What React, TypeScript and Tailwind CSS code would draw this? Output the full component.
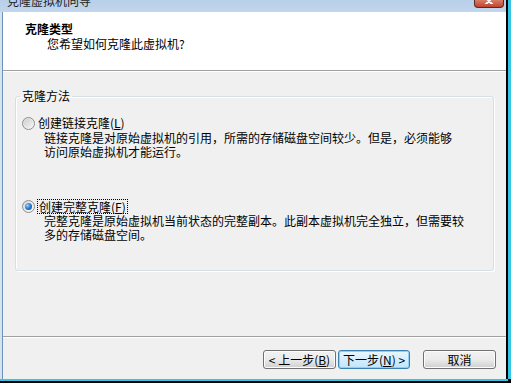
import React from 'react';

const font = { fontFamily: '"Noto Sans CJK SC", "Microsoft YaHei", sans-serif' };

function Radio({ checked }: { checked?: boolean }) {
  return (
    <div className="w-[13px] h-[13px] rounded-full border border-[#8d8d8d] bg-gradient-to-br from-[#d9d9d9] to-[#fbfbfb] flex items-center justify-center shrink-0">
      {checked ? (
        <div className="w-[7px] h-[7px] rounded-full bg-[radial-gradient(circle_at_35%_35%,#9fd3ff_0%,#2f7fd3_45%,#0b3f8c_100%)]" />
      ) : (
        <div className="w-[9px] h-[9px] rounded-full bg-gradient-to-br from-[#cfcfcf] to-[#f4f4f4]" />
      )}
    </div>
  );
}

function Button({ children, focused }: { children: React.ReactNode; focused?: boolean }) {
  return (
    <div
      className={
        'h-[19px] rounded-[3px] border flex items-center justify-center text-[12px] leading-[14px] text-black ' +
        (focused
          ? 'w-[72px] border-[#3c7fb1] bg-gradient-to-b from-[#eaf6fd] to-[#bee6fd] shadow-[inset_0_0_0_1px_#8fd0f5]'
          : 'w-[73px] border-[#707070] bg-gradient-to-b from-[#f2f2f2] via-[#ebebeb] to-[#cfcfcf] shadow-[inset_0_0_0_1px_#fcfcfc]')
      }
    >
      {children}
    </div>
  );
}

export default function App() {
  return (
    <div className="w-[511px] h-[383px] bg-black flex flex-col overflow-hidden" style={font}>
      <div className="flex h-[379px]">
        <div className="w-[506px] flex flex-col">
          {/* title bar */}
          <div className="h-[12px] bg-gradient-to-b from-[#b7cfe9] to-[#c2d6ec] flex overflow-hidden relative">
            <div className="ml-[7px] mt-[-5px] text-[12px] leading-[12px] text-[#1e1e1e]">克隆虚拟机向导</div>
            <div className="absolute left-[474px] top-0 w-[30px] h-[8px] rounded-b-[4px] border border-t-0 border-[#5b2a23] bg-gradient-to-b from-[#d77b66] to-[#c0432e] flex justify-center overflow-hidden">
              <svg width="10" height="8" viewBox="0 0 10 8" className="-mt-[4px]">
                <path d="M1 1 L9 9 M9 1 L1 9" stroke="#fff" strokeWidth="2" />
              </svg>
            </div>
          </div>
          <div className="flex flex-1">
            <div className="w-[2px] bg-[#d4e2f2]" />
            <div className="w-[1px] bg-[#6f90b8]" />
            <div className="flex-1 flex flex-col bg-[#f0f0f0]">
              {/* header */}
              <div className="h-[58px] bg-white pt-[10px] pl-[22px]">
                <div className="text-[12px] leading-[14px] font-bold text-black">克隆类型</div>
                <div className="pl-[22px] mt-[1px] text-[12px] leading-[14px] text-black">您希望如何克隆此虚拟机?</div>
              </div>
              <div className="h-px bg-[#a0a0a0]" />
              <div className="h-px bg-white" />
              {/* body */}
              <div className="flex-1 pt-[17px] px-[12px]">
                <fieldset className="h-[182px] border border-[#d5dfe5] rounded-[3px] shadow-[inset_1px_1px_0_#ffffff,1px_1px_0_#ffffff] text-[12px] text-black">
                  <legend className="ml-[4px] px-[2px] leading-[14px]">克隆方法</legend>
                  <div className="pt-[13px] pl-[6px]">
                    <div className="flex items-center h-[14px] gap-[3px]">
                      <Radio />
                      <span className="leading-[14px]">
                        创建链接克隆(<span className="underline">L</span>)
                      </span>
                    </div>
                    <div className="pl-[22px] mt-[1px] leading-[14px]">
                      链接克隆是对原始虚拟机的引用，所需的存储磁盘空间较少。但是，必须能够
                      <br />
                      访问原始虚拟机才能运行。
                    </div>
                    <div className="flex items-center h-[14px] gap-[3px] mt-[40px]">
                      <Radio checked />
                      <span className="leading-[13px] outline outline-1 outline-dotted outline-black px-[1px]">
                        创建完整克隆(<span className="underline">F</span>)
                      </span>
                    </div>
                    <div className="pl-[22px] mt-[1px] leading-[14px]">
                      完整克隆是原始虚拟机当前状态的完整副本。此副本虚拟机完全独立，但需要较
                      <br />
                      多的存储磁盘空间。
                    </div>
                  </div>
                </fieldset>
              </div>
              <div className="h-px bg-[#a0a0a0]" />
              <div className="h-px bg-white" />
              {/* buttons */}
              <div className="h-[41px] flex justify-end items-start pt-[12px] pr-[10px]">
                <Button>
                  &lt; 上一步(<span className="underline">B</span>)
                </Button>
                <div className="w-[2px]" />
                <Button focused>
                  下一步(<span className="underline">N</span>) &gt;
                </Button>
                <div className="w-[13px]" />
                <Button>取消</Button>
              </div>
            </div>
          </div>
        </div>
        <div className="w-[2px] bg-black" />
        <div className="w-[3px] bg-[#35c6e6]" />
      </div>
      <div className="h-[2px] w-[508px] bg-[#35c6e6]" />
      <div className="h-[2px] bg-black" />
    </div>
  );
}
